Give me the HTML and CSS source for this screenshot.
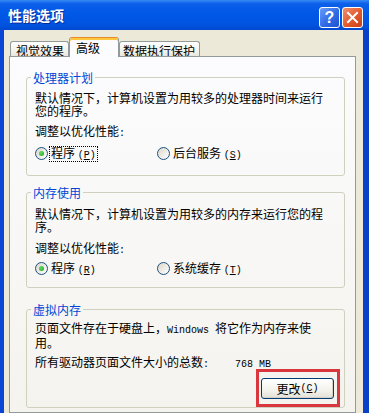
FILE: index.html
```html
<!DOCTYPE html>
<html lang="zh-CN">
<head>
    <meta charset="UTF-8">
    <title>性能选项</title>
    <link rel="stylesheet" href="styles.css">
</head>
<body>
    <div class="window">
        <div class="titlebar">
            <span class="title">性能选项</span>
            <div class="title-buttons">
                <span class="tbtn tbtn-help">?</span>
                <span class="tbtn tbtn-close">
                    <svg width="21" height="21" viewBox="0 0 21 21">
                        <path d="M6 6 L15 15 M15 6 L6 15" stroke="#fff" stroke-width="2" stroke-linecap="square"/>
                    </svg>
                </span>
            </div>
        </div>

        <div class="client">
            <div class="tabs">
                <div class="tab tab-visual">视觉效果</div>
                <div class="tab tab-advanced active">高级</div>
                <div class="tab tab-dep">数据执行保护</div>
            </div>

            <div class="panel">
                <fieldset class="group group-cpu">
                    <legend>处理器计划</legend>
                    <p class="desc">默认情况下，计算机设置为用较多的处理器时间来运行<br>您的程序。</p>
                    <p class="label">调整以优化性能<span class="mono">:</span></p>
                    <div class="options">
                        <div class="opt">
                            <span class="radio checked"></span>
                            <span class="opt-text focus">程序 <span class="mono">(<u>P</u>)</span></span>
                        </div>
                        <div class="opt">
                            <span class="radio"></span>
                            <span class="opt-text">后台服务 <span class="mono">(<u>S</u>)</span></span>
                        </div>
                    </div>
                </fieldset>

                <fieldset class="group group-mem">
                    <legend>内存使用</legend>
                    <p class="desc">默认情况下，计算机设置为用较多的内存来运行您的程<br>序。</p>
                    <p class="label">调整以优化性能<span class="mono">:</span></p>
                    <div class="options">
                        <div class="opt">
                            <span class="radio checked"></span>
                            <span class="opt-text">程序 <span class="mono">(<u>R</u>)</span></span>
                        </div>
                        <div class="opt">
                            <span class="radio"></span>
                            <span class="opt-text">系统缓存 <span class="mono">(<u>T</u>)</span></span>
                        </div>
                    </div>
                </fieldset>

                <fieldset class="group group-vm">
                    <legend>虚拟内存</legend>
                    <p class="desc">页面文件存在于硬盘上，<span class="mono">Windows </span>将它作为内存来使<br>用。</p>
                    <p class="label total">所有驱动器页面文件大小的总数<span class="mono">:</span><span class="mono size">768 MB</span></p>
                    <div class="actions">
                        <div class="highlight">
                            <button class="btn">更改<span class="mono">(<u>C</u>)</span></button>
                        </div>
                    </div>
                </fieldset>
            </div>
        </div>
    </div>
</body>
</html>
```

FILE: styles.css
```css
* {
    box-sizing: border-box;
}
body {
    margin: 0;
    font-family: "Noto Sans CJK SC", sans-serif;
    font-size: 12px;
    color: #000;
    background: #ece9d8;
}
.window {
    width: 369px;
    height: 413px;
    display: flex;
    flex-direction: column;
    overflow: hidden;
    background: linear-gradient(to right, #0a46d6, #0a5be8 50%, #0841c8);
}
.titlebar {
    height: 30px;
    flex-shrink: 0;
    display: flex;
    justify-content: space-between;
    padding: 0 6px 0 8px;
    background: linear-gradient(to bottom, #3a8af5 0%, #0c60ea 12%, #0058e6 45%, #0054e0 80%, #0048cf 100%);
}
.title {
    color: #fff;
    font-weight: bold;
    font-size: 14px;
    line-height: 30px;
    text-shadow: 1px 1px #0b2a9a;
}
.title-buttons {
    display: flex;
    gap: 2px;
    padding-top: 7px;
}
.tbtn {
    width: 21px;
    height: 21px;
    border: 1px solid #fff;
    border-radius: 3px;
    display: flex;
    align-items: center;
    justify-content: center;
}
.tbtn-help {
    background: linear-gradient(135deg, #6d9ef7, #2f6ae6 55%, #1d52d0);
    color: #fff;
    font-family: "Liberation Sans", sans-serif;
    font-weight: bold;
    font-size: 16px;
}
.tbtn-close {
    background: linear-gradient(135deg, #f09170, #e2582c 55%, #c6411c);
}
.tbtn-close svg {
    margin: -1px;
}
.client {
    flex: 1;
    display: flex;
    flex-direction: column;
    margin: 0 6px 0 4px;
    padding: 7px 7px 0 5px;
    background: #ece9d8;
}
.tabs {
    display: flex;
    align-items: flex-end;
    height: 20px;
    margin-bottom: -1px;
}
.tab {
    height: 16px;
    border: 1px solid #919b9c;
    border-bottom: none;
    border-radius: 3px 3px 0 0;
    padding-top: 2px;
    line-height: 13px;
    white-space: nowrap;
    background: linear-gradient(to bottom, #ffffff, #f0efe8 70%, #e6e4da);
}
.tab-visual {
    width: 59px;
    padding-left: 5px;
    margin-left: 1px;
}
.tab-advanced {
    width: 50px;
    padding-left: 6px;
}
.tab-dep {
    width: 81px;
    padding-left: 3px;
}
.tab.active {
    height: 20px;
    padding-top: 3px;
    position: relative;
    z-index: 1;
    border-top: 1px solid #e68b2c;
    box-shadow: inset 0 2px 0 #ffc83c;
    background: #fcfcfe;
}
.panel {
    flex: 1;
    border: 1px solid #919b9c;
    padding: 14px 9px 0 16px;
    background: linear-gradient(to bottom, #fcfcfe, #f4f3ee);
}
.group {
    width: 319px;
    margin: 0;
    border: 1px solid #d0d0bf;
    border-radius: 3px;
    padding: 7px 8px 15px 8px;
}
.group legend {
    margin-left: -4px;
    padding: 0 2px;
    line-height: 13px;
    color: #0046d5;
}
.group-mem {
    margin-top: 10px;
    padding-top: 8px;
    padding-bottom: 12px;
}
.group-vm {
    margin-top: 15px;
    padding-top: 5px;
    padding-bottom: 0;
}
.desc, .label {
    margin: 0;
    line-height: 13px;
}
.label {
    margin-top: 7px;
}
.group-mem .label {
    margin-top: 8px;
}
.group-vm .label {
    margin-top: 6px;
}
.mono {
    font-family: "Liberation Mono", monospace;
    font-size: 10px;
    line-height: 10px;
}
.size {
    margin-left: 26px;
}
.options {
    display: flex;
    margin-top: 8px;
}
.group-mem .options {
    margin-top: 6px;
}
.opt {
    width: 122px;
    height: 13px;
    display: flex;
    align-items: center;
    gap: 1px;
    line-height: 11px;
}
.opt-text {
    padding: 0 1px;
    border: 1px dotted transparent;
}
.opt-text.focus {
    border-color: #000;
}
.radio {
    width: 13px;
    height: 13px;
    flex-shrink: 0;
    border: 1px solid #1c5180;
    border-radius: 50%;
    position: relative;
    background: linear-gradient(135deg, #dcd7cb, #ffffff);
}
.radio.checked::after {
    content: "";
    position: absolute;
    left: 3px;
    top: 3px;
    width: 5px;
    height: 5px;
    border-radius: 50%;
    background: radial-gradient(circle at 35% 35%, #5fdc5f, #21a121);
}
.actions {
    display: flex;
    justify-content: flex-end;
    margin-top: -1px;
    margin-right: -4px;
}
.highlight {
    border: 3px solid #d9363e;
    padding: 6px 3px 5px 2px;
}
.btn {
    display: flex;
    align-items: center;
    justify-content: center;
    width: 73px;
    height: 21px;
    padding: 0;
    border: 1px solid #003c74;
    border-radius: 3px;
    font-family: "Noto Sans CJK SC", sans-serif;
    font-size: 12px;
    line-height: 13px;
    color: #000;
    background: linear-gradient(to bottom, #ffffff, #f3f2ec 60%, #e3e1d6);
    box-shadow: inset -1px -1px 0 #d6d0c5;
}
```
